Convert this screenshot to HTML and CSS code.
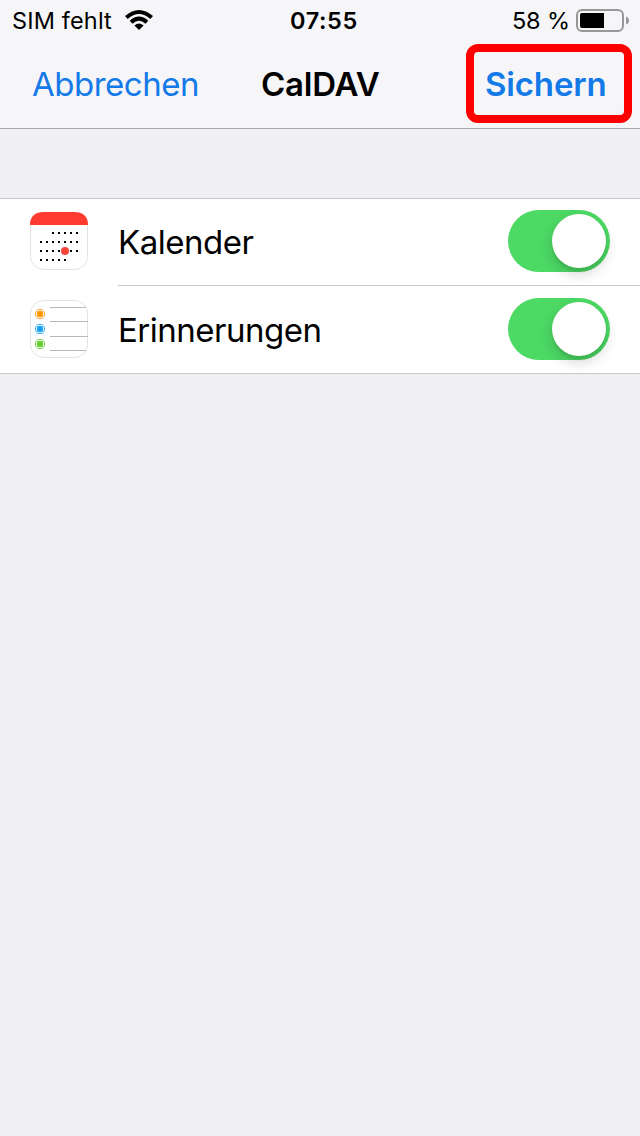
FILE: index.html
```
<!DOCTYPE html>
<html lang="de">
<head>
<meta charset="utf-8">
<title>CalDAV</title>
<link rel="stylesheet" href="styles.css">
</head>
<body>
<header class="top">
  <div class="status">
    <div class="carrier">
      <span class="carrier-name">SIM fehlt</span>
      <svg class="wifi" width="28" height="20" viewBox="0 0 28 20">
        <path d="M0 6 Q14 -6 28 6 L25.300 8.900 Q14 -.8 2.700 8.900Z"/>
        <path d="M4.700 10.800 Q14 2.400 23.300 10.800 L20.500 13.700 Q14 7.900 7.500 13.700Z"/>
        <path d="M9.400 15.500 Q14 11.400 18.600 15.500 L14 20Z"/>
      </svg>
    </div>
    <time class="clock">07:55</time>
    <div class="power">
      <span class="percent">58 %</span>
      <svg class="battery" width="54" height="24" viewBox="0 0 54 24">
        <rect x="1" y="1" width="46" height="21" rx="5" fill="none" stroke="#98989b" stroke-width="2"/>
        <path d="M6 4H28V19H6Q4 19 4 17V6Q4 4 6 4Z"/>
        <path d="M50 7.500Q53 8.500 53 11.500T50 15.500Z" fill="#98989b"/>
      </svg>
    </div>
  </div>
  <nav class="nav">
    <a class="cancel">Abbrechen</a>
    <h1 class="title">CalDAV</h1>
    <a class="save"><span class="save-label">Sichern</span></a>
  </nav>
</header>
<main class="group">
  <div class="row">
    <svg class="icon" width="58" height="58" viewBox="0 0 58 58">
      <rect x=".5" y=".5" width="57" height="57" rx="13" fill="#fff" stroke="#e2e2e2"/>
      <path d="M0 13C0 4 5 0 14 0H44C53 0 58 4 58 13Z" fill="#ff3b30"/>
      <g stroke="#000" stroke-width="2">
        <path d="M22 21H49" stroke-dasharray="2 4"/>
        <path d="M10 30H49" stroke-dasharray="2 4"/>
        <path d="M10 39H49" stroke-dasharray="2 4"/>
        <path d="M10 48H37" stroke-dasharray="2 4"/>
      </g>
      <circle cx="35" cy="39" r="4" fill="#f8443b"/>
    </svg>
    <div class="cell divided">
      <span class="label">Kalender</span>
      <span class="switch"><span class="knob"></span></span>
    </div>
  </div>
  <div class="row">
    <svg class="icon" width="58" height="58" viewBox="0 0 58 58">
      <rect x=".5" y=".5" width="57" height="57" rx="13" fill="#fff" stroke="#e2e2e2"/>
      <g stroke="#b8b8b8"><path d="M20 7.500H56M20 21.500H58M20 36.500H58M20 50.500H56"/></g>
      <g fill="none" stroke-width="1">
        <circle cx="10" cy="14" r="4.700" stroke="#f6a02b"/>
        <circle cx="10" cy="29" r="4.700" stroke="#2ba6ee"/>
        <circle cx="10" cy="44" r="4.700" stroke="#6bd33f"/>
      </g>
      <circle cx="10" cy="14" r="3.200" fill="#ff9500"/>
      <circle cx="10" cy="29" r="3.200" fill="#1ba0f0"/>
      <circle cx="10" cy="44" r="3.200" fill="#62d136"/>
    </svg>
    <div class="cell">
      <span class="label">Erinnerungen</span>
      <span class="switch"><span class="knob"></span></span>
    </div>
  </div>
</main>
</body>
</html>
```
FILE: styles.css
```
* { box-sizing: border-box; }
body {
  margin: 0;
  min-height: 1136px;
  background: #efeff4;
  color: #000;
  font-family: Inter, "Liberation Sans", sans-serif;
}
.top {
  height: 129px;
  background: #f6f6f8;
  border-bottom: 1px solid #a9a9b0;
}
.status {
  display: grid;
  grid-template-columns: 278px 1fr 129px;
  height: 40px;
  padding: 1px 10px 0 12px;
  font-size: 23.500px;
  line-height: 40px;
}
.carrier, .power { display: flex; align-items: center; white-space: nowrap; height: 40px; }
.carrier-name { width: 113px; letter-spacing: .15px; }
.power { justify-content: flex-end; }
.percent { margin-right: 6px; letter-spacing: -.1px; }
.clock { font-weight: 600; letter-spacing: .6px; }
.wifi { display: block; margin-bottom: 2px; }
.battery { display: block; }
.nav {
  display: grid;
  grid-template-columns: 229px 1fr 174px;
  align-items: center;
  height: 88px;
  padding: 0 0 0 32px;
  font-size: 33px;
  line-height: 40px;
}
.cancel, .save { color: #147ae8; }
.cancel { letter-spacing: -.5px; }
.title { margin: 0; font-size: 33px; font-weight: 600; letter-spacing: -.25px; }
.save {
  align-self: start;
  width: 166px;
  height: 79px;
  margin-top: 4px;
  padding: 12px 0 0 11px;
  border: 8px solid #fe0000;
  border-radius: 12px;
  font-weight: 600;
  letter-spacing: -.15px;
}
.group {
  margin-top: 69px;
  height: 176px;
  background: #fff;
  border-top: 1px solid #c8c7cc;
  border-bottom: 1px solid #c8c7cc;
}
.row { display: flex; height: 87px; padding-left: 30px; }
.row + .row { height: 88px; }
.icon { margin: 13px 30px 0 0; flex: none; }
.row + .row .icon { margin-top: 14px; }
.cell {
  display: flex;
  flex: 1;
  align-items: flex-start;
  justify-content: space-between;
  padding: 11px 30px 0 0;
}
.row + .row .cell { padding-top: 12px; }
.divided { border-bottom: 1px solid #c8c7cc; }
.label { font-size: 33px; line-height: 64px; letter-spacing: -.5px; }
.switch {
  display: flex;
  justify-content: flex-end;
  width: 102px;
  height: 62px;
  padding: 4px;
  border-radius: 31px;
  background: #4cd964;
}
.knob {
  width: 54px;
  height: 54px;
  border-radius: 50%;
  background: #fff;
  box-shadow: 0 6px 14px rgba(0,0,0,.17), 0 4px 2px rgba(0,0,0,.06);
}
```
